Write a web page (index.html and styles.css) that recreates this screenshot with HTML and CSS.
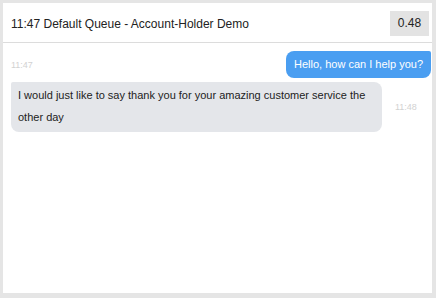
FILE: index.html
```html
<!DOCTYPE html>
<html>
<head>
<meta charset="utf-8">
<link rel="stylesheet" href="styles.css">
</head>
<body>
<div class="card">
  <div class="header">
    <div class="title">11:47 Default Queue - Account-Holder Demo</div>
    <div class="badge">0.48</div>
  </div>
  <div class="messages">
    <div class="row row-out">
      <span class="time">11:47</span>
      <div class="bubble bubble-out">Hello, how can I help you?</div>
    </div>
    <div class="row row-in">
      <div class="bubble bubble-in">I would just like to say thank you for your amazing customer service the other day</div>
      <span class="time time-in">11:48</span>
    </div>
  </div>
</div>
</body>
</html>
```
FILE: styles.css
```css
html, body {
  margin: 0;
  padding: 0;
}
body {
  background: #e5e5e5;
  width: 436px;
  height: 298px;
  box-sizing: border-box;
  padding: 3px 4px 5px 3px;
  font-family: "Liberation Sans", Arial, sans-serif;
}
.card {
  background: #fff;
  height: 100%;
  box-sizing: border-box;
}
.header {
  display: flex;
  align-items: center;
  justify-content: space-between;
  padding: 8px 3px 6px 8px;
  border-bottom: 1px solid #dcdcdc;
}
.title {
  font-size: 12px;
  color: #222;
}
.badge {
  background: #e3e3e3;
  height: 25px;
  line-height: 25px;
  width: 39px;
  text-align: center;
  font-size: 12px;
  color: #222;
}
.messages {
  padding: 8px 1px 0 8px;
  display: flex;
  flex-direction: column;
  gap: 4px;
}
.row {
  display: flex;
  align-items: center;
}
.row-out {
  justify-content: space-between;
}
.time {
  font-size: 9px;
  color: #d2d2d2;
}
.bubble {
  font-size: 11px;
  box-sizing: border-box;
}
.bubble-out {
  background: #4a9ef1;
  color: #fff;
  height: 27px;
  line-height: 27px;
  padding: 0 8px;
  border-radius: 8px 2px 8px 8px;
}
.bubble-in {
  background: #e4e6ea;
  color: #222;
  max-width: 371px;
  padding: 2px 7px 4px 7px;
  line-height: 22px;
  border-radius: 2px 8px 8px 8px;
}
.time-in {
  margin-left: 13px;
}
```
